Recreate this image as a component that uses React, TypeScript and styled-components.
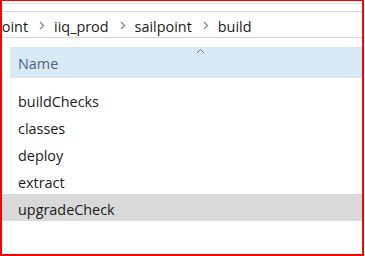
import React from 'react';
import styled, { createGlobalStyle } from 'styled-components';

const GlobalStyle = createGlobalStyle`
  html, body {
    margin: 0;
    padding: 0;
    background: #ffffff;
  }
  body {
    font-family: "Open Sans", "Noto Sans", sans-serif;
  }
`;

const crumbs = ['point', 'iiq_prod', 'sailpoint', 'build'];
const folders = ['buildChecks', 'classes', 'deploy', 'extract', 'upgradeCheck'];
const selectedFolder = 'upgradeCheck';

const Frame = styled.div`
  box-sizing: border-box;
  width: 364px;
  height: 256px;
  border-style: solid;
  border-color: #ff0000;
  border-width: 1px 2px 2px 2px;
  overflow: hidden;
  display: flex;
  flex-direction: column;
`;

const TopEdge = styled.div`
  margin-top: 2px;
  height: 7px;
  border-top: 1px solid #e6e6e6;
`;

const AddressBar = styled.div`
  height: 25px;
  border-top: 1px solid #d9d9d9;
  border-bottom: 1px solid #d9d9d9;
  display: flex;
  align-items: center;
  white-space: nowrap;
  overflow: hidden;
`;

const Crumb = styled.span<{ $lead?: boolean }>`
  font-size: 14.4px;
  color: #1b1b1b;
  margin-left: ${(p) => (p.$lead ? '-9px' : '0')};
  padding-top: 3px;
`;

const Separator = styled.svg`
  width: 6px;
  height: 9px;
  margin: 1px 9px 0 11px;
  flex: none;
`;

const Chevron = () => (
  <Separator viewBox="0 0 6 9">
    <path d="M1 1 L4.5 4.5 L1 8" fill="none" stroke="#8a8a8a" strokeWidth="1.4" />
  </Separator>
);

const ColumnHeader = styled.div`
  position: relative;
  margin: 9px 0 0 8px;
  height: 31px;
  background: #d9eaf7;
  display: flex;
  align-items: center;
  padding: 2px 0 0 8px;
  box-sizing: border-box;
  font-size: 14.4px;
  color: #4d6082;
`;

const SortCaret = styled.svg`
  position: absolute;
  left: 186px;
  top: 1px;
  width: 9px;
  height: 6px;
`;

const List = styled.div`
  margin-top: 8px;
  display: flex;
  flex-direction: column;
`;

const Row = styled.div<{ $selected?: boolean }>`
  box-sizing: border-box;
  height: 27px;
  display: flex;
  align-items: center;
  padding: 3px 0 0 16px;
  font-size: 14.4px;
  color: #1b1b1b;
  background: ${(p) => (p.$selected ? '#d9d9d9' : 'transparent')};
`;

export default function App() {
  return (
    <>
      <GlobalStyle />
      <Frame>
        <TopEdge />
        <AddressBar>
          {crumbs.map((c, i) => (
            <React.Fragment key={c}>
              {i > 0 && <Chevron />}
              <Crumb $lead={i === 0}>{c}</Crumb>
            </React.Fragment>
          ))}
        </AddressBar>
        <ColumnHeader>
          <SortCaret viewBox="0 0 9 6">
            <path d="M1 5 L4.5 1.5 L8 5" fill="none" stroke="#7a7a7a" strokeWidth="1" />
          </SortCaret>
          Name
        </ColumnHeader>
        <List>
          {folders.map((f) => (
            <Row key={f} $selected={f === selectedFolder}>
              {f}
            </Row>
          ))}
        </List>
      </Frame>
    </>
  );
}
